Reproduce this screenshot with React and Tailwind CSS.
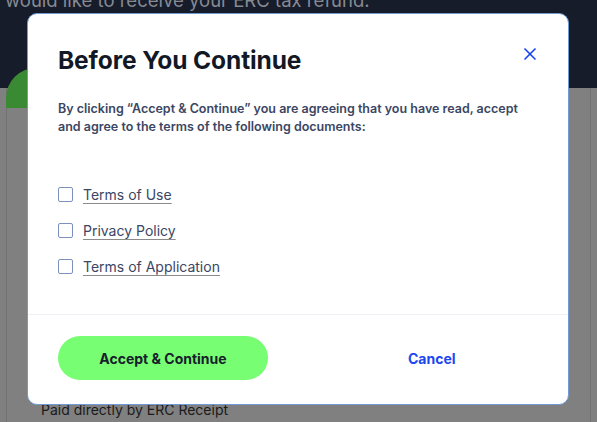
import { X } from 'lucide-react';

const docs = ['Terms of Use', 'Privacy Policy', 'Terms of Application'];

export default function App() {
    return (
        <div className="relative w-[597px] h-[422px] overflow-hidden bg-[#808080]" style={{ fontFamily: 'Inter, "Open Sans", sans-serif' }}>
            {/* page behind the overlay */}
            <div className="h-[88px] bg-[#171c2b] relative flow-root">
                <p className="pl-[5px] -mt-[12px] text-[18.5px] leading-[24px] text-[#868a92]">
                    would like to receive your ERC tax refund.
                </p>
                <div className="absolute left-[6px] top-[68px] w-[60px] h-[40px] rounded-t-full bg-[#3a8a34]" />
            </div>
            <div className="mx-[6px] h-[334px] border-x border-[#737373] pt-[312px] pl-[34px]">
                <p className="text-[14px] leading-[20px] text-[#1b1b1b]">Paid directly by ERC Receipt</p>
            </div>

            {/* modal */}
            <div className="absolute left-[27px] top-[13px] w-[542px] h-[392px] bg-white rounded-[10px] border border-[#6f9ad6] flex flex-col">
                <div className="flex-1 pl-[30px] pr-[30px] pt-[28px]">
                    <div className="flex items-start justify-between">
                        <h2 className="text-[24.5px] leading-[36px] font-bold tracking-[-0.1px] text-[#121826]">Before You Continue</h2>
                        <X className="w-[20px] h-[20px] text-[#1443f0] mt-[2px] -mr-[2px]" strokeWidth={2} />
                    </div>
                    <p className="mt-[22px] text-[12.5px] leading-[18px] font-semibold text-[#3b4663]">
                        By clicking “Accept &amp; Continue” you are agreeing that you have read, accept and agree to the terms of the following documents:
                    </p>
                    <div className="mt-[51px] flex flex-col gap-[21px]">
                        {docs.map((d) => (
                            <label key={d} className="flex items-center gap-[10px]">
                                <span className="w-[15px] h-[15px] rounded-[2px] border-[1.5px] border-[#7d90bd]" />
                                <span className="text-[14px] leading-[14px] text-[#3b4663] underline decoration-[#8a8a8a] underline-offset-[3px]">{d}</span>
                            </label>
                        ))}
                    </div>
                </div>
                <div className="h-[90px] border-t border-[#edf1f5] flex items-start pt-[21px] pl-[30px]">
                    <button className="w-[210px] h-[44px] rounded-full bg-[#77fe72] text-[14px] font-bold text-[#18202c]">
                        Accept &amp; Continue
                    </button>
                    <button className="ml-[140px] h-[44px] text-[14px] font-bold text-[#1c46f0]">Cancel</button>
                </div>
            </div>
        </div>
    );
}
